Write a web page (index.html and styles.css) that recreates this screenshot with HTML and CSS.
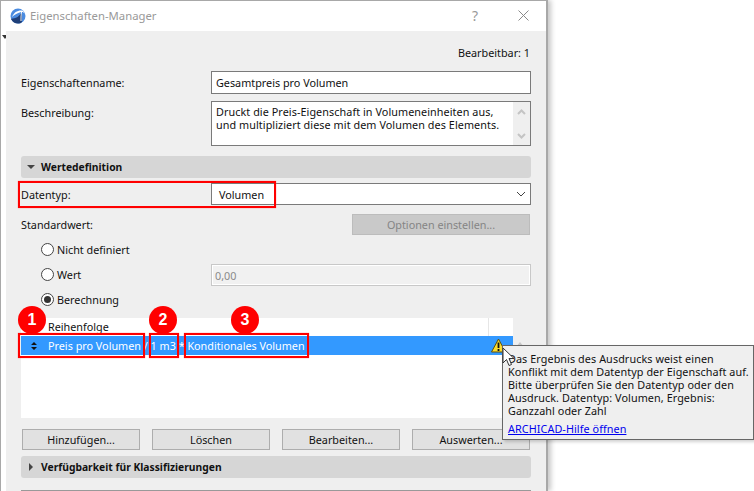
FILE: index.html
```html
<!DOCTYPE html>
<html lang="de">
<head>
<meta charset="utf-8">
<title>Eigenschaften-Manager</title>
<link rel="stylesheet" href="styles.css">
</head>
<body>
<div class="window">
  <header class="titlebar">
    <svg class="app-icon" width="16" height="16" viewBox="0 0 16 16"><circle cx="8" cy="8" r="7.500" fill="#4a8be0"/><path d="M1 11c1.500 3 4 4.500 7 4.500 2 0 3-.5 4-1.500V5c-2 1-3 3-4.500 4-2 1-4.500 1.500-6.500 2z" fill="#1f3f78"/><path d="M2 9C4 4 8 2 12 2.500c1.500 .5 2.500 2 3 3.500-1-1.500-2-2-3-2-.5 2-.5 6-.5 9h-1c0-3 0-6 .5-9C7 5 4 7 2 9z" fill="#fff"/></svg>
    <span class="title">Eigenschaften-Manager</span>
    <span class="help">?</span>
    <svg class="close" width="11" height="11" viewBox="0 0 11 11"><path d="M.5.5l10 10M10.500.5l-10 10" stroke="#8a8a8a" fill="none"/></svg>
  </header>
  <div class="body-wrap">
    <div class="strip"><svg class="strip-arrow" width="6" height="4" viewBox="0 0 6 4"><path d="M0 0h6L3 4z" fill="#333"/></svg></div>
    <main class="content">
      <div class="editable">Bearbeitbar: 1</div>
      <div class="row name-row">
        <label class="label">Eigenschaftenname:</label>
        <div class="field">Gesamtpreis pro Volumen</div>
      </div>
      <div class="row desc-row">
        <label class="label desc-label">Beschreibung:</label>
        <div class="field desc">
          <div class="desc-text">Druckt die Preis-Eigenschaft in Volumeneinheiten aus,<br>und multipliziert diese mit dem Volumen des Elements.</div>
          <div class="desc-scroll">
            <svg width="9" height="6" viewBox="0 0 9 6"><path d="M1 5l3.500-3.500L8 5" stroke="#c4c4c4" stroke-width="2" fill="none"/></svg>
            <svg width="9" height="6" viewBox="0 0 9 6"><path d="M1 1l3.500 3.500L8 1" stroke="#c4c4c4" stroke-width="2" fill="none"/></svg>
          </div>
        </div>
      </div>
      <div class="section section-first"><span class="tri-down"></span>Wertedefinition</div>
      <div class="row type-row">
        <label class="label">Datentyp:</label>
        <div class="field select"><span class="select-value">Volumen</span>
          <svg width="10" height="6" viewBox="0 0 10 6"><path d="M1 1l4 4 4-4" stroke="#444" fill="none"/></svg>
        </div>
      </div>
      <div class="row std-row">
        <span class="label">Standardwert:</span>
        <div class="btn-disabled">Optionen einstellen...</div>
      </div>
      <div class="radio-row r1"><span class="radio"></span><span>Nicht definiert</span></div>
      <div class="radio-row r2"><span class="radio"></span><span class="radio-label">Wert</span><div class="field value-field">0,00</div></div>
      <div class="radio-row r3"><span class="radio on"></span><span>Berechnung</span></div>
      <div class="list-wrap">
        <div class="list">
          <div class="list-head"><span class="head-name">Reihenfolge</span><span class="head-warn"></span></div>
          <div class="list-row">
            <svg class="sort" width="6" height="8" viewBox="0 0 6 8"><path d="M3 0L6 3H0zM3 8L0 5h6z" fill="#111"/></svg>
            <span>Preis pro Volumen / 1 m3 * Konditionales Volumen</span>
          </div>
        </div>
        <div class="list-scroll"><svg width="8" height="5" viewBox="0 0 8 5"><path d="M4 0l4 5H0z" fill="#c8c8c8"/></svg></div>
      </div>
      <div class="buttons">
        <div class="btn">Hinzufügen...</div>
        <div class="btn">Löschen</div>
        <div class="btn">Bearbeiten...</div>
        <div class="btn">Auswerten...</div>
      </div>
      <div class="section section-second"><span class="tri-right"></span>Verfügbarkeit für Klassifizierungen</div>
      <div class="section-next"></div>
    </main>
  </div>
</div>

<div class="mark m-type"></div>
<div class="mark m-one"></div>
<div class="mark m-two"></div>
<div class="mark m-three"></div>
<div class="badge b-one">1</div>
<div class="badge b-two">2</div>
<div class="badge b-three">3</div>

<svg class="warn" width="15" height="15" viewBox="0 0 15 15"><path d="M7.500 1L14.500 14H.5z" fill="#fbdc2e" stroke="#5d4f0c" stroke-linejoin="round"/><path d="M7.500 4.500v5.500M7.500 11v2" stroke="#111" stroke-width="1.800"/></svg>

<div class="tooltip">
  <p class="tip-text">Das Ergebnis des Ausdrucks weist einen<br>Konflikt mit dem Datentyp der Eigenschaft auf.<br>Bitte überprüfen Sie den Datentyp oder den<br>Ausdruck. Datentyp: Volumen, Ergebnis:<br>Ganzzahl oder Zahl</p>
  <a class="tip-link" href="#">ARCHICAD-Hilfe öffnen</a>
</div>
<svg class="cursor" width="14" height="20" viewBox="0 0 14 20"><path d="M1 1v15l3.500-3.500 2.500 6 2.500-1-2.500-6H12z" fill="#fff" stroke="#333"/></svg>
</body>
</html>
```
FILE: styles.css
```css
* { box-sizing: border-box; }
html, body { margin: 0; height: 491px; overflow: hidden; background: #fff; }
body { position: relative; width: 754px; font: 10.800px/13px "Noto Sans", Tahoma, sans-serif; color: #111; }

.window { width: 548px; height: 491px; border: 1px solid #a8a8a8; border-right-width: 2px; border-bottom: 0; background: #fff; box-shadow: 3px 0 5px rgba(0,0,0,.22); overflow: hidden; display: flex; flex-direction: column; }
.titlebar { height: 30px; flex: none; display: flex; align-items: center; padding: 0 17px 0 9px; }
.app-icon { margin-right: 4px; }
.title { flex: 1; color: #999; font-size: 11.300px; margin-bottom: 1px; }
.help { color: #999; font-size: 14px; margin-right: 40px; margin-bottom: 1px; }
.close { margin-bottom: 1px; }

.body-wrap { flex: 1; display: flex; min-height: 0; }
.strip { width: 5px; flex: none; background: #fff; padding: 4px 0 0 1px; }
.strip-arrow { display: block; }
.content { flex: 1; min-width: 0; background: #efefef; padding: 15px 15px 0 15px; }

.editable { text-align: right; height: 15px; padding-right: 1px; }
.row { display: flex; align-items: center; }
.label { width: 190px; flex: none; }
.field { flex: 1; min-width: 0; background: #fff; border: 1px solid #7a7a7a; }
.name-row { margin-top: 10px; height: 23px; }
.name-row .field { height: 23px; padding: 4px; }
.desc-row { margin-top: 7px; align-items: flex-start; height: 45px; }
.desc-label { padding-top: 5px; }
.desc { height: 45px; display: flex; padding: 3px 0 0 4px; }
.desc-text { flex: 1; min-width: 0; white-space: nowrap; letter-spacing: .07px; }
.desc-scroll { width: 17px; flex: none; margin: -3px 0 0 0; height: 43px; background: #efefef; display: flex; flex-direction: column; align-items: center; justify-content: space-between; padding: 7px 0 6px; }
.desc-scroll svg { display: block; }

.section { height: 22px; background: #d6d6d6; border-radius: 3px; font-weight: bold; font-size: 10.300px; display: flex; align-items: center; padding-left: 20px; position: relative; }
.section-first { margin-top: 10px; }
.tri-down { position: absolute; left: 6px; top: 9px; border: 4px solid transparent; border-top: 4px solid #444; border-bottom: 0; }
.tri-right { position: absolute; left: 8px; top: 7px; border: 4px solid transparent; border-left: 4px solid #444; border-right: 0; }

.type-row { margin-top: 5px; height: 22px; }
.select { height: 22px; display: flex; align-items: center; justify-content: space-between; padding: 0 4px 0 7px; }

.std-row { margin-top: 9px; height: 21px; justify-content: space-between; }
.btn-disabled { width: 178px; height: 21px; margin-right: 1px; background: #c9c9c9; border: 1px solid #bcbcbc; color: #858585; text-align: center; line-height: 19px; }

.radio-row { display: flex; align-items: center; padding-left: 20px; height: 25px; gap: 3px; }
.r1 { margin-top: 2px; }
.radio { width: 13px; height: 13px; border: 1px solid #444; border-radius: 50%; background: #fff; flex: none; position: relative; }
.radio.on::after { content: ""; position: absolute; left: 2px; top: 2px; width: 7px; height: 7px; border-radius: 50%; background: #333; }
.radio-label { width: 151px; flex: none; }
.value-field { height: 22px; border: 1px solid #c8c8c8; background: #f1f1f1; box-shadow: inset 0 0 0 1px #fff; color: #8a8a8a; padding: 4px 3px; }

.list-wrap { display: flex; margin-top: 6px; height: 100px; width: 506px; }
.list { width: 492px; background: #fff; }
.list-head { height: 18px; display: flex; }
.head-name { width: 467px; padding: 2px 0 0 27px; }
.head-warn { flex: 1; border-left: 1px solid #e6e6e6; }
.list-row { height: 19px; background: #3399ff; color: #fff; display: flex; align-items: center; padding-left: 10px; gap: 11px; }
.sort { flex: none; }
.list-scroll { width: 14px; display: flex; justify-content: center; padding-top: 24px; }
.list-scroll svg { display: block; }

.buttons { display: flex; gap: 12px; padding-left: 1px; margin-top: 11px; }
.btn { width: 118px; height: 21px; background: #e1e1e1; border: 1px solid #adadad; text-align: center; line-height: 19px; }
.section-second { margin-top: 6px; }
.section-next { height: 6px; margin-top: 12px; background: #d6d6d6; border-top: 1px solid #999; }

.mark { position: absolute; border: 2px solid #f00; box-shadow: 0 0 1px #ff6a6a; }
.m-type { left: 18px; top: 181px; width: 258px; height: 27px; }
.m-one { left: 18px; top: 333px; width: 127px; height: 25px; }
.m-two { left: 149px; top: 333px; width: 30px; height: 25px; }
.m-three { left: 184px; top: 333px; width: 125px; height: 25px; }

.badge { position: absolute; top: 306px; width: 28px; height: 28px; border-radius: 50%; background: #f00; color: #fff; font: bold 16px/27px "Liberation Sans", Arial, sans-serif; text-align: center; }
.b-one { left: 18px; }
.b-two { left: 149px; }
.b-three { left: 231px; }

.warn { position: absolute; left: 491px; top: 338px; }
.tooltip { position: absolute; left: 502px; top: 345px; width: 252px; height: 95px; background: #efefef; border: 1px solid #666; box-shadow: 2px 2px 3px rgba(0,0,0,.18); padding: 6px 5px; letter-spacing: .08px; }
.tip-text { margin: 0; white-space: nowrap; }
.tip-link { display: block; margin-top: 5px; color: #0000ee; text-decoration: underline; }
.cursor { position: absolute; left: 502px; top: 347px; }
```
